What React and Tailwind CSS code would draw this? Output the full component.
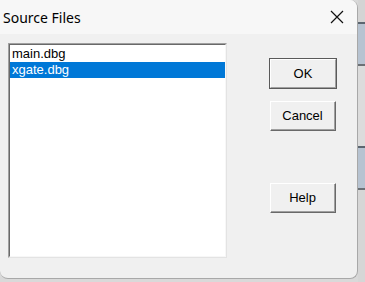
import React from "react";

function Btn({ children, def }) {
  if (def) {
    return (
      <div className="w-[68px] h-[31px] border border-[#5a5a5a] bg-[#f0f0f0]">
        <div className="w-full h-full border-t border-l border-t-white border-l-white border-b border-r border-b-[#a0a0a0] border-r-[#a0a0a0] flex items-center justify-center text-[13px] text-black" style={{fontFamily: "'Liberation Sans', Arial, sans-serif"}}>
          {children}
        </div>
      </div>
    );
  }
  return (
    <div className="w-[66px] h-[30px] ml-[1px] border-t border-l border-t-white border-l-white border-b border-r border-b-[#696969] border-r-[#696969] bg-[#f0f0f0]">
      <div className="w-full h-full border-b border-r border-b-[#a0a0a0] border-r-[#a0a0a0] flex items-center justify-center text-[13px] text-black" style={{fontFamily: "'Liberation Sans', Arial, sans-serif"}}>
        {children}
      </div>
    </div>
  );
}

export default function App() {
  return (
    <div className="w-[365px] h-[282px] flex bg-[#d9d9d9] overflow-hidden">
      <div className="w-[358px] h-[279px] flex flex-col bg-[#f0f0f0] rounded-b-[8px] rounded-tr-[8px] border-r border-b border-[#a8a8a8] overflow-hidden">
        <div className="h-[34px] bg-[#f7f7f7] flex items-center justify-between pl-[3px] pr-[12px]">
          <span className="text-[14px] text-black" style={{fontFamily: "'Noto Sans', 'Open Sans', sans-serif"}}>Source Files</span>
          <svg width="14" height="14" viewBox="0 0 14 14" className="mr-[1px]">
            <path d="M1 1 L13 13 M13 1 L1 13" stroke="#111" strokeWidth="1.2" />
          </svg>
        </div>
        <div className="flex pl-[8px] pt-[9px]">
          <div className="w-[219px] h-[215px] border-t border-l border-t-[#a0a0a0] border-l-[#a0a0a0] border-b border-r border-b-[#e3e3e3] border-r-[#e3e3e3]">
            <div className="w-full h-full border-t border-l border-t-[#696969] border-l-[#696969] border-b border-r border-b-[#f7f7f7] border-r-[#f7f7f7] bg-white pt-[1px] text-[13px] leading-[16px]" style={{fontFamily: "'Liberation Sans', Arial, sans-serif"}}>
              <div className="px-[2px] text-black h-[16px]">main.dbg</div>
              <div className="px-[2px] text-white bg-[#0078d7] h-[16px]">xgate.dbg</div>
            </div>
          </div>
          <div className="ml-[42px] pt-[15px] flex flex-col">
            <Btn def>OK</Btn>
            <div className="h-[12px]" />
            <Btn>Cancel</Btn>
            <div className="h-[52px]" />
            <Btn>Help</Btn>
          </div>
        </div>
      </div>
      <div className="flex-1 flex flex-col">
        <div className="h-[22px] bg-[#d4d4d4]" />
        <div className="h-[2px] bg-[#5c6670]" />
        <div className="h-[40px] bg-[#b7c3d1]" />
        <div className="h-[2px] bg-[#6b7075]" />
        <div className="h-[80px] bg-[#dcdcdc]" />
        <div className="h-[2px] bg-[#5c6670]" />
        <div className="h-[40px] bg-[#b7c3d1]" />
        <div className="h-[2px] bg-[#6b7075]" />
        <div className="flex-1 bg-[#d6d6d6]" />
      </div>
    </div>
  );
}
